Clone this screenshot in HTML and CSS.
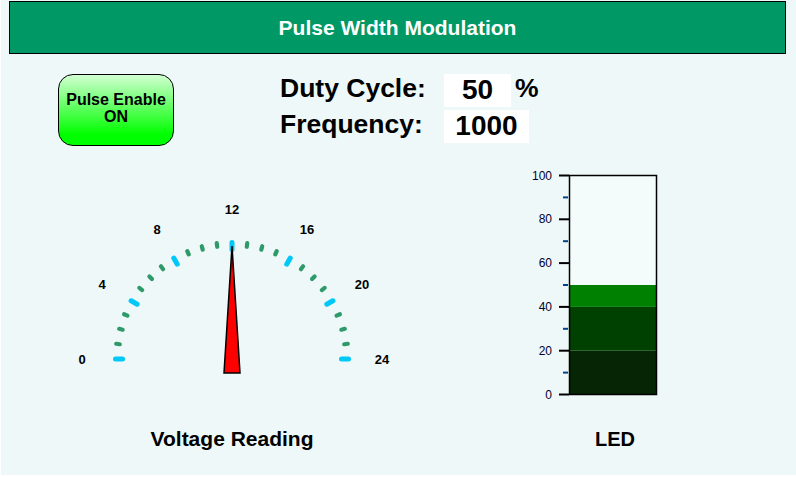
FILE: index.html
```html
<!DOCTYPE html>
<html>
<head>
<meta charset="utf-8">
<link rel="stylesheet" href="styles.css">
</head>
<body>
<div class="page">
  <div class="header">Pulse Width Modulation</div>
  <div class="top-row">
    <div class="enable-btn">
      <span>Pulse Enable</span>
      <span>ON</span>
    </div>
    <div class="fields">
      <div class="field-row">
        <div class="field-label">Duty Cycle:</div>
        <div class="value-box duty">50</div>
        <div class="unit">%</div>
      </div>
      <div class="field-row">
        <div class="field-label">Frequency:</div>
        <div class="value-box freq">1000</div>
      </div>
    </div>
  </div>
  <div class="bottom-row">
    <div class="gauge-col">
      <svg class="gauge" width="344" height="240" viewBox="0 0 344 240" id="gauge">
        <g id="ticks"></g>
        <g class="gauge-labels">
          <text x="22" y="209">0</text>
          <text x="42" y="134">4</text>
          <text x="97" y="79">8</text>
          <text x="172" y="59">12</text>
          <text x="247" y="79">16</text>
          <text x="302" y="134">20</text>
          <text x="322" y="209">24</text>
        </g>
        <polygon class="needle" points="172,96 164,223 180,223"></polygon>
      </svg>
      <div class="caption voltage">Voltage Reading</div>
    </div>
    <div class="bar-col">
      <svg class="bar" width="190" height="250" viewBox="0 0 190 250">
        <rect x="49.5" y="25.5" width="87" height="219" fill="#f3fbfb"></rect>
        <rect x="49.5" y="200.7" width="87" height="43.8" fill="#052505"></rect>
        <rect x="49.5" y="156.9" width="87" height="43.8" fill="#004000"></rect>
        <rect x="49.5" y="135" width="87" height="21.9" fill="#008000"></rect>
        <rect x="49.5" y="25.5" width="87" height="219" fill="none" stroke="#000" stroke-width="1.5"></rect>
        <g class="major" stroke="#000" stroke-width="2">
          <line x1="39" y1="25.5" x2="49" y2="25.5"></line>
          <line x1="39" y1="69.3" x2="49" y2="69.3"></line>
          <line x1="39" y1="113.1" x2="49" y2="113.1"></line>
          <line x1="39" y1="156.9" x2="49" y2="156.9"></line>
          <line x1="39" y1="200.7" x2="49" y2="200.7"></line>
          <line x1="39" y1="244.5" x2="49" y2="244.5"></line>
        </g>
        <g class="minor" stroke="#004488" stroke-width="2">
          <line x1="43" y1="47.4" x2="48" y2="47.4"></line>
          <line x1="43" y1="91.2" x2="48" y2="91.2"></line>
          <line x1="43" y1="135" x2="48" y2="135"></line>
          <line x1="43" y1="178.8" x2="48" y2="178.8"></line>
          <line x1="43" y1="222.6" x2="48" y2="222.6"></line>
        </g>
        <g class="bar-labels">
          <text x="32" y="29.5">100</text>
          <text x="32" y="73.3">80</text>
          <text x="32" y="117.1">60</text>
          <text x="32" y="160.9">40</text>
          <text x="32" y="204.7">20</text>
          <text x="32" y="248.5">0</text>
        </g>
      </svg>
      <div class="caption led">LED</div>
    </div>
  </div>
</div>
<script>
(function () {
  var g = document.getElementById('ticks');
  var ns = 'http://www.w3.org/2000/svg';
  var cx = 172, cy = 209;
  for (var i = 0; i <= 24; i++) {
    var a = (180 - i * 7.5) * Math.PI / 180;
    var major = i % 4 === 0;
    var r1 = major ? 109.5 : 113.2;
    var r2 = major ? 116.5 : 116.8;
    var l = document.createElementNS(ns, 'line');
    l.setAttribute('x1', (cx + r1 * Math.cos(a)).toFixed(2));
    l.setAttribute('y1', (cy - r1 * Math.sin(a)).toFixed(2));
    l.setAttribute('x2', (cx + r2 * Math.cos(a)).toFixed(2));
    l.setAttribute('y2', (cy - r2 * Math.sin(a)).toFixed(2));
    l.setAttribute('class', major ? 'tick-major' : 'tick-minor');
    g.appendChild(l);
  }
})();
</script>
</body>
</html>
```
FILE: styles.css
```css
html, body {
  margin: 0;
  padding: 0;
  background: #ffffff;
}
.page {
  margin-left: 1px;
  width: 795px;
  height: 475px;
  background: #eef8f8;
  overflow: hidden;
  font-family: "Liberation Sans", Arial, sans-serif;
  color: #000;
}
.header {
  box-sizing: border-box;
  width: 777px;
  height: 53px;
  margin: 1px 0 0 8px;
  border: 1px solid #000;
  background: #009865;
  color: #fff;
  font-weight: bold;
  font-size: 21px;
  line-height: 51px;
  text-align: center;
}
.top-row {
  display: flex;
  align-items: flex-start;
  height: 72px;
  margin-top: 20px;
  padding-left: 57px;
}
.enable-btn {
  box-sizing: border-box;
  width: 116px;
  height: 72px;
  border: 1px solid #000;
  border-radius: 15px;
  background: linear-gradient(to bottom, #d2ffd2 0%, #00ff00 85%);
  display: flex;
  flex-direction: column;
  align-items: center;
  padding-top: 16px;
  font-weight: bold;
  font-size: 16px;
  line-height: 17px;
}
.fields {
  display: flex;
  flex-direction: column;
  gap: 3px;
  margin-left: 106px;
  font-weight: bold;
  font-size: 26.5px;
}
.field-row {
  display: flex;
  align-items: flex-start;
  height: 33px;
}
.field-label {
  width: 164px;
  line-height: 28px;
}
.unit {
  line-height: 28px;
  margin-left: 4px;
}
.value-box {
  background: #fff;
  height: 33px;
  text-align: center;
  font-size: 28px;
  line-height: 31px;
}
.value-box.duty {
  width: 67px;
}
.value-box.freq {
  width: 85px;
}
.bottom-row {
  display: flex;
  margin-top: 4px;
  padding-left: 59px;
}
.gauge-col {
  width: 344px;
  display: flex;
  flex-direction: column;
  align-items: center;
}
.gauge {
  display: block;
}
.tick-major {
  stroke: #00c8f8;
  stroke-width: 5;
  stroke-linecap: round;
}
.tick-minor {
  stroke: #2e9a6a;
  stroke-width: 4.2;
  stroke-linecap: round;
}
.gauge-labels text {
  font-family: "Liberation Sans", Arial, sans-serif;
  font-weight: bold;
  font-size: 13px;
  text-anchor: middle;
  dominant-baseline: central;
  fill: #000;
}
.needle {
  fill: #ff0000;
  stroke: #000;
  stroke-width: 1.5;
  stroke-linejoin: miter;
}
.caption {
  font-weight: bold;
  line-height: 24px;
}
.caption.voltage {
  font-size: 21px;
  margin-top: 37px;
}
.bar-col {
  width: 190px;
  margin-left: 116px;
  display: flex;
  flex-direction: column;
  align-items: center;
}
.bar {
  display: block;
}
.bar-labels text {
  font-family: "Liberation Sans", Arial, sans-serif;
  font-size: 12px;
  text-anchor: end;
  fill: #000030;
}
.caption.led {
  font-size: 20px;
  margin-top: 27px;
}
```
